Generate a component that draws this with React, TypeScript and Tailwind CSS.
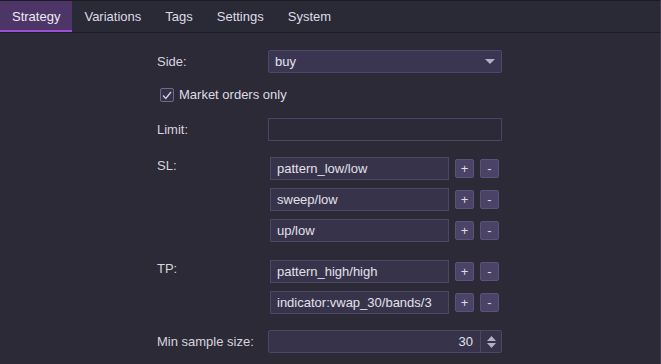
import React from 'react';

const tabs = ['Strategy', 'Variations', 'Tags', 'Settings', 'System'];

const Label = ({ children, top }: { children: React.ReactNode; top?: boolean }) => (
  <div className={`text-[13px] text-[#d6d5de] ${top ? 'self-start leading-[17px]' : 'self-center'}`}>
    {children}
  </div>
);

const ListRow = ({ value }: { value: string }) => (
  <div className="flex items-center ml-[2px] h-[23px]">
    <div className="w-[179px] h-[23px] bg-[#37334b] border border-[#4c4764] px-[6px] flex items-center text-[13px] text-[#e2e1ea]">
      {value}
    </div>
    <button className="ml-[6px] w-[19px] h-[19px] rounded-[2px] bg-[#4a4365] border border-[#5a5279] text-[#dcdae6] text-[13px] leading-none flex items-center justify-center">
      +
    </button>
    <button className="ml-[6px] w-[19px] h-[19px] rounded-[2px] bg-[#4a4365] border border-[#5a5279] text-[#dcdae6] text-[13px] leading-none flex items-center justify-center">
      -
    </button>
  </div>
);

export default function App() {
  return (
    <div
      className="w-[661px] h-[364px] bg-[#2c2a37] border-r border-[#3f3b52] overflow-hidden"
      style={{ fontFamily: '"Liberation Sans", Arial, sans-serif' }}
    >
      {/* tab bar */}
      <div className="h-[33px] bg-[#2a2936] border-t border-b border-[#1c1b24] flex">
        {tabs.map((t, i) => (
          <div
            key={t}
            className={`px-[12px] flex items-center text-[13px] ${
              i === 0
                ? 'bg-[#4d3567] text-[#ecebf2] border-b-2 border-[#9b4fd2] pt-[2px]'
                : 'text-[#dddce5]'
            }`}
          >
            {t}
          </div>
        ))}
      </div>

      <div className="pl-[157px] pt-[17px] grid grid-cols-[111px_234px]">
        <Label>Side:</Label>
        <div className="h-[23px] bg-[#3a3651] border border-[#4d4867] rounded-[2px] flex items-center justify-between pl-[6px] pr-[6px] text-[13px] text-[#e4e3ec]">
          <span>buy</span>
          <svg width="10" height="5" viewBox="0 0 10 5">
            <path d="M0 0 H10 L5 5 Z" fill="#b3b0c4" />
          </svg>
        </div>

        <div className="col-span-2 mt-[15px] pl-[3px] flex items-center h-[14px]">
          <div className="w-[14px] h-[14px] border border-[#6e6889] rounded-[2px] bg-[#34304a] flex items-center justify-center">
            <svg width="10" height="9" viewBox="0 0 10 9">
              <path d="M1 4.5 L3.8 7.5 L9 1" fill="none" stroke="#cfcde0" strokeWidth="1.4" />
            </svg>
          </div>
          <span className="ml-[5px] text-[13px] text-[#dddce5]">Market orders only</span>
        </div>

        <div className="col-span-2 mt-[16px] grid grid-cols-[111px_234px]">
          <Label>Limit:</Label>
          <div className="h-[23px] bg-[#2c2a38] border border-[#4a4562]"></div>
        </div>

        <div className="col-span-2 mt-[16px] grid grid-cols-[111px_234px]">
          <Label top>SL:</Label>
          <div className="flex flex-col gap-[8px]">
            <ListRow value="pattern_low/low" />
            <ListRow value="sweep/low" />
            <ListRow value="up/low" />
          </div>
        </div>

        <div className="col-span-2 mt-[18px] grid grid-cols-[111px_234px]">
          <Label top>TP:</Label>
          <div className="flex flex-col gap-[8px]">
            <ListRow value="pattern_high/high" />
            <ListRow value="indicator:vwap_30/bands/3" />
          </div>
        </div>

        <div className="col-span-2 mt-[16px] grid grid-cols-[111px_234px]">
          <Label>Min sample size:</Label>
          <div className="h-[23px] bg-[#37334b] border border-[#4c4764] rounded-[2px] flex text-[13px] text-[#e2e1ea]">
            <div className="flex-1 flex items-center justify-end pr-[7px]">30</div>
            <div className="w-[21px] border-l border-[#4c4764] flex flex-col items-center justify-center gap-[2px]">
              <svg width="9" height="5" viewBox="0 0 9 5">
                <path d="M0 5 H9 L4.5 0 Z" fill="#b3b0c4" />
              </svg>
              <svg width="9" height="5" viewBox="0 0 9 5">
                <path d="M0 0 H9 L4.5 5 Z" fill="#b3b0c4" />
              </svg>
            </div>
          </div>
        </div>
      </div>
    </div>
  );
}
